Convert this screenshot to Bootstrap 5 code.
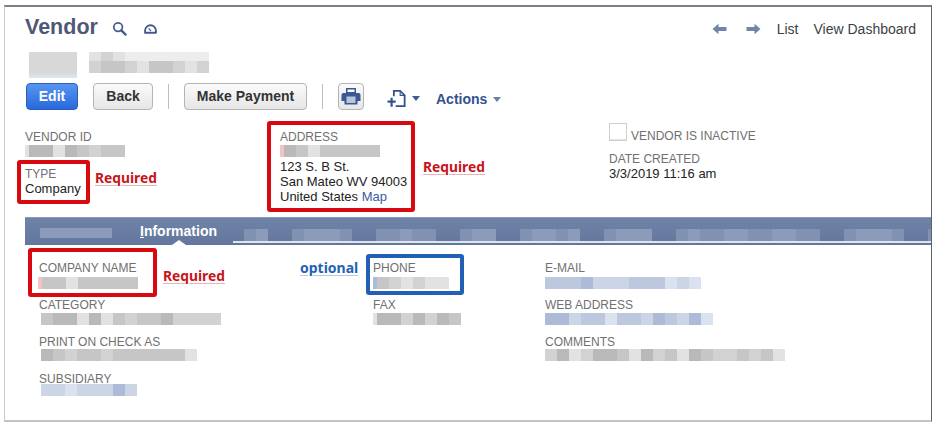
<!DOCTYPE html>
<html lang="en">
<head>
<meta charset="utf-8">
<title>Vendor</title>
<link href="https://cdn.jsdelivr.net/npm/bootstrap@5.3.0/dist/css/bootstrap.min.css" rel="stylesheet">
<style>
html,body{height:100%;background:#fff;overflow:hidden}
body{font-family:"Liberation Sans",Arial,sans-serif;font-size:13px;color:#222;line-height:15px}
.frame{width:928px;height:417px;margin:5px 0 0 4px;border:1px solid #ccc;border-top:2px solid #7b7f87;border-right:1px solid #5f6268;border-bottom:2px solid #c4c4c4}
.head-row{padding:8px 15px 0 20px;height:45px}
.page-title{font-size:21.5px;font-weight:700;line-height:24px;color:#4e5876;margin:0}
.ico-search{margin-left:14px;margin-top:6px}
.ico-gauge{margin-left:16px;margin-top:9px}
.top-links a{color:#3c3f45;text-decoration:none;font-size:14px;line-height:16px}
.top-links{gap:15px;margin-top:6px}
.arrows{gap:19px;margin-right:1px}
.blur-row{padding-left:24px;height:31px;gap:12px}
.blur-a{width:48px;height:26px;filter:blur(.6px);background:linear-gradient(#d8d8d8 0,#d8d8d8 78%,#dce6f6 100%)}
.mos{display:flex;height:12px;filter:blur(.6px)}
.mos i{display:block;width:12px;flex:none}
.mos i.n4{width:4px}
.g0{background:#ededed}.g1{background:#b9b9b9}.g2{background:#c6c6c6}.g3{background:#d2d2d2}.g4{background:#e2e2e2}.gr{background:#f6c3c5}.gb{background:#a9bcdf}
.b1{background:#aebbd8}.b2{background:#bdc8df}.b3{background:#cbd5e6}.b4{background:#dbe2ef}
.t1{background:#8091b1}.t2{background:#8b9bb9}
.stack{display:flex;flex-direction:column;height:21px}
.mos.soft{height:9px}
.act-row{padding-left:21px;height:28px;margin-bottom:4px}
.btn.nsbtn{font-family:"Liberation Sans",Arial,sans-serif;font-size:14px;font-weight:700;line-height:16px;padding:4px 0;border-radius:4px;height:27px;border:1px solid #b4b4b4;color:#333;background:linear-gradient(#fafafa,#e6e6e6)}
.btn.nsbtn.edit{color:#fff;border-color:#2c60b8;background:linear-gradient(#5596f2,#2a68dc);width:52px}
.btn.nsbtn.back{width:60px;margin-left:15px}
.btn.nsbtn.pay{width:123px}
.btn.nsbtn.print{width:26px;padding:0;display:flex;align-items:center;justify-content:center}
.vsep{width:1px;height:25px;background:#bdbdbd;margin:1px 15px}
.new-ico{margin-left:23px;margin-top:7px}
.caret-dn{width:0;height:0;border:4px solid transparent;border-top:5px solid #3f5a92;border-bottom:0}
.caret-dn.mute{border-top-color:#6e7f9f}
.caret-a{margin-left:5px;margin-top:13px}
.caret-b{margin-left:6px}
.act-link{color:#33528f;font-size:14px;font-weight:700;text-decoration:none;line-height:16px;margin-left:16px;margin-top:8px}
.fields-top{height:102px;padding-left:20px;padding-top:15px}
.colA{width:255px}
.colB{width:329px}
.fld{position:relative}
.lbl{font-size:12px;line-height:14px;color:#707070;display:block;white-space:nowrap}
.lbl + .mos{margin-top:1px}
.val{line-height:15.2px;font-size:13px}
.val-addr{margin-top:2px}
.val a{color:#3a5c9f;text-decoration:none}
.type-fld{margin-top:10px}
.ring{position:absolute;border:4px solid #d90a0f;border-radius:3px;pointer-events:none}
.ring.blue{border-color:#2160b5}
.note{position:absolute;font-family:"Noto Sans",sans-serif;font-size:13.8px;font-weight:700;line-height:16px;color:#c8141b;white-space:nowrap;text-decoration:underline;text-decoration-color:#e9b4b4;text-underline-offset:2px}
.note.blue{color:#2462b4;text-decoration-color:#b4c8e6;font-size:14px}
.ring-type{left:-8px;top:-7px;width:73px;height:44px}
.note-type{left:70px;top:3px}
.ring-addr{left:-13px;top:-9px;width:148px;height:91px}
.note-addr{left:143px;top:29px}
.ring-co{left:-11px;top:-13px;width:129px;height:49px}
.note-co{left:124px;top:7px}
.ring-ph{left:-7px;top:-7px;width:98px;height:41px}
.note-ph{left:-73px;top:-1px}
.col-flags{margin-top:-7px}
.flag-row{gap:4px;margin-bottom:11px}
.flag-row .lbl{margin-bottom:-2px}
.chk{width:18px;height:18px;border:1px solid #cfcfcf;flex:none;box-shadow:inset 0 -1px 0 #e6e6e6}
.tabbar{margin-left:20px;height:28px;background:linear-gradient(#6f83a8,#63779d);position:relative;padding-left:15px;border-top:1px solid #8a9ab6}
.tab-first{margin-top:10px;height:10px}
.tab-on{color:#fff;font-size:14px;font-weight:700;line-height:16px;margin-left:28px;width:93px;flex:none;padding-top:5px}
.notch{position:absolute;left:147px;bottom:0;width:0;height:0;border:7px solid transparent;border-bottom:5px solid #fff;border-top:0}
.rest{flex:1;border-bottom:2px solid #dfe5ef;height:25px;padding-left:11px;gap:24px;align-items:flex-start;padding-top:11px;overflow:hidden}
.fields-bot{padding-left:34px;padding-top:16px}
.colC{width:334px}
.colD{width:172px}
.fld-b{height:37px}
.fld-b:nth-child(1) .mos{margin-top:2px}
.fld-b:nth-child(2) .mos{margin-top:1px}
.fld-b:nth-child(3) .mos{margin-top:0}
.fld-b:nth-child(4) .mos{margin-top:-2px}
.in2{margin-left:2px}
.outdent{margin-left:-1px}
</style>
</head>
<body>
<div class="frame">
  <div class="head-row d-flex justify-content-between align-items-start">
    <div class="d-flex align-items-start">
      <h1 class="page-title">Vendor</h1>
      <svg class="ico-search" width="15" height="15" viewBox="0 0 16 16" fill="none" stroke="#41598f" aria-hidden="true"><circle cx="6.5" cy="6.5" r="4.6" stroke-width="1.8"/><path d="M10 10l4.500 4.500" stroke-width="2.400" stroke-linecap="round"/></svg>
      <svg class="ico-gauge" width="15" height="10" viewBox="0 0 15 11" fill="none" stroke="#41598f" aria-hidden="true"><path d="M1.500 9.600V7.200a6 5.800 0 0 1 12 0v2.400z" stroke-width="2" stroke-linejoin="round"/><path d="M5.500 4.800L8 7.600" stroke-width="1.400"/></svg>
    </div>
    <div class="top-links d-flex align-items-center">
      <div class="arrows d-flex">
        <svg width="15" height="12" viewBox="0 0 15 12" fill="#6f86a8" aria-hidden="true"><path d="M0.500 6L6.500 0.800V4H14.500V8H6.500V11.200z"/></svg>
        <svg width="15" height="12" viewBox="0 0 15 12" fill="#6f86a8" aria-hidden="true"><path d="M14.500 6L8.500 0.800V4H0.500V8H8.500V11.200z"/></svg>
      </div>
      <a href="#">List</a>
      <a href="#">View Dashboard</a>
    </div>
  </div>

  <div class="blur-row d-flex">
    <div class="blur-a"></div>
    <div class="stack">
      <div class="mos soft"><i class="g4"></i><i class="g3"></i><i class="g4"></i><i class="g0"></i><i class="g0"></i><i class="g0"></i><i class="g0"></i><i class="g0"></i><i class="g0"></i><i class="g0"></i></div>
      <div class="mos"><i class="g3"></i><i class="g2"></i><i class="g2"></i><i class="g3"></i><i class="g4"></i><i class="g2"></i><i class="g2"></i><i class="g3"></i><i class="g4"></i><i class="g3"></i></div>
    </div>
  </div>

  <div class="act-row d-flex align-items-start">
    <a class="btn nsbtn edit" href="#">Edit</a>
    <a class="btn nsbtn back" href="#">Back</a>
    <span class="vsep"></span>
    <a class="btn nsbtn pay" href="#">Make Payment</a>
    <span class="vsep"></span>
    <a class="btn nsbtn print" href="#" aria-label="Print">
      <svg width="20" height="19" viewBox="0 0 20 19" aria-hidden="true"><path fill="#3a5796" d="M5 1h10v5H5z"/><path fill="#3a5796" d="M2.500 6h15A2 2 0 0 1 19.500 8v6h-3V17.500H3.500V14h-3V8a2 2 0 0 1 2-2z"/><path fill="#b9c6da" d="M5.500 9.500h9v6.500h-9z"/><path fill="#fff" d="M6.500 2.500h7v2.500h-7z"/></svg>
    </a>
    <svg class="new-ico" width="20" height="18" viewBox="0 0 21 20" fill="none" stroke="#33528f" stroke-width="2" aria-hidden="true"><path d="M7 7V1h7l5 5v12H9"/><path d="M14 1v5h5" stroke-width="1.200"/><path d="M0 13h9M4.500 8.500v10" stroke-width="2.400"/></svg>
    <span class="caret-dn caret-a"></span>
    <a class="act-link d-flex align-items-center" href="#">Actions<span class="caret-dn mute caret-b"></span></a>
  </div>

  <div class="fields-top d-flex">
    <div class="colA">
      <div class="fld">
        <span class="lbl">VENDOR ID</span>
        <div class="mos"><i class="n4 g4"></i><i class="g1"></i><i class="g1"></i><i class="g4"></i><i class="g1"></i><i class="g2"></i><i class="g3"></i><i class="g2"></i><i class="g2"></i></div>
      </div>
      <div class="fld type-fld">
        <span class="ring ring-type"></span>
        <span class="lbl">TYPE</span>
        <div class="val">Company</div>
        <span class="note note-type">Required</span>
      </div>
    </div>
    <div class="colB">
      <div class="fld">
        <span class="ring ring-addr"></span>
        <span class="lbl">ADDRESS</span>
        <div class="mos"><i class="n4 gr"></i><i class="g1"></i><i class="g2"></i><i class="g4"></i><i class="g2"></i><i class="g2"></i><i class="g2"></i><i class="g2"></i><i class="g2"></i></div>
        <div class="val val-addr">123 S. B St.<br>San Mateo WV 94003<br>United States <a href="#">Map</a></div>
        <span class="note note-addr">Required</span>
      </div>
    </div>
    <div class="col-flags">
      <div class="d-flex align-items-end flag-row">
        <span class="chk"></span><span class="lbl">VENDOR IS INACTIVE</span>
      </div>
      <span class="lbl">DATE CREATED</span>
      <div class="val">3/3/2019 11:16 am</div>
    </div>
  </div>

  <div class="tabbar d-flex">
    <div class="mos tab-first"><i class="t2"></i><i class="t2"></i><i class="t2"></i><i class="t2"></i><i class="t2"></i><i class="t2"></i></div>
    <div class="tab-on"><u>I</u>nformation</div>
    <span class="notch"></span>
    <div class="rest d-flex">
      <div class="mos"><i class="t1"></i><i class="t2"></i></div>
      <div class="mos"><i class="t1"></i><i class="t2"></i><i class="t2"></i><i class="t2"></i><i class="t1"></i></div>
      <div class="mos"><i class="t1"></i><i class="t1"></i><i class="t2"></i><i class="t1"></i><i class="t1"></i></div>
      <div class="mos"><i class="t1"></i><i class="t2"></i><i class="t2"></i></div>
      <div class="mos"><i class="t1"></i><i class="t2"></i><i class="t2"></i><i class="t1"></i><i class="t2"></i></div>
      <div class="mos"><i class="t1"></i><i class="t2"></i><i class="t2"></i><i class="t2"></i></div>
      <div class="mos"><i class="t1"></i><i class="t2"></i><i class="t1"></i><i class="t1"></i><i class="t2"></i><i class="t2"></i><i class="t1"></i><i class="t1"></i><i class="t2"></i><i class="t2"></i><i class="t1"></i><i class="t1"></i></div>
      <div class="mos"><i class="t1"></i><i class="t2"></i><i class="t2"></i><i class="t2"></i><i class="t1"></i></div>
      <div class="mos"><i class="t1"></i><i class="t2"></i></div>
    </div>
  </div>

  <div class="fields-bot d-flex">
    <div class="colC">
      <div class="fld fld-b">
        <span class="ring ring-co"></span>
        <span class="lbl">COMPANY NAME</span>
        <div class="mos outdent"><i class="n4 gr"></i><i class="g2"></i><i class="g2"></i><i class="g4"></i><i class="g2"></i><i class="g2"></i><i class="g2"></i><i class="g2"></i><i class="g2"></i></div>
        <span class="note note-co">Required</span>
      </div>
      <div class="fld fld-b">
        <span class="lbl">CATEGORY</span>
        <div class="mos in2"><i class="g2"></i><i class="g1"></i><i class="g1"></i><i class="g4"></i><i class="g1"></i><i class="g4"></i><i class="g2"></i><i class="g3"></i><i class="g2"></i><i class="g2"></i><i class="g1"></i><i class="g3"></i><i class="g3"></i><i class="g3"></i><i class="g3"></i></div>
      </div>
      <div class="fld fld-b">
        <span class="lbl">PRINT ON CHECK AS</span>
        <div class="mos in2"><i class="g1"></i><i class="g2"></i><i class="g3"></i><i class="g2"></i><i class="g2"></i><i class="g3"></i><i class="g2"></i><i class="g2"></i><i class="g2"></i><i class="g2"></i><i class="g2"></i><i class="g2"></i><i class="g4"></i></div>
      </div>
      <div class="fld fld-b">
        <span class="lbl">SUBSIDIARY</span>
        <div class="mos in2"><i class="b3"></i><i class="b3"></i><i class="b4"></i><i class="b3"></i><i class="b3"></i><i class="b3"></i><i class="b1"></i><i class="b3"></i></div>
      </div>
    </div>
    <div class="colD">
      <div class="fld fld-b">
        <span class="ring ring-ph blue"></span>
        <span class="note note-ph blue">optional</span>
        <span class="lbl">PHONE</span>
        <div class="mos"><i class="n4 gb"></i><i class="g2"></i><i class="g3"></i><i class="g4"></i><i class="g3"></i><i class="g4"></i><i class="g4"></i></div>
      </div>
      <div class="fld fld-b">
        <span class="lbl">FAX</span>
        <div class="mos"><i class="n4 g4"></i><i class="g1"></i><i class="g1"></i><i class="g3"></i><i class="g1"></i><i class="g3"></i><i class="g1"></i><i class="g2"></i></div>
      </div>
    </div>
    <div>
      <div class="fld fld-b">
        <span class="lbl">E-MAIL</span>
        <div class="mos"><i class="b2"></i><i class="b2"></i><i class="b2"></i><i class="b1"></i><i class="b3"></i><i class="b3"></i><i class="b3"></i><i class="b2"></i><i class="b2"></i><i class="b2"></i><i class="b4"></i><i class="b3"></i><i class="b4"></i></div>
      </div>
      <div class="fld fld-b">
        <span class="lbl">WEB ADDRESS</span>
        <div class="mos"><i class="b1"></i><i class="b1"></i><i class="b3"></i><i class="b2"></i><i class="b2"></i><i class="b4"></i><i class="b2"></i><i class="b2"></i><i class="b3"></i><i class="b1"></i><i class="b2"></i><i class="b3"></i><i class="b1"></i><i class="b4"></i></div>
      </div>
      <div class="fld fld-b">
        <span class="lbl">COMMENTS</span>
        <div class="mos"><i class="g3"></i><i class="g1"></i><i class="g4"></i><i class="g3"></i><i class="g1"></i><i class="g1"></i><i class="g2"></i><i class="g4"></i><i class="g1"></i><i class="g3"></i><i class="g2"></i><i class="g4"></i><i class="g1"></i><i class="g2"></i><i class="g3"></i><i class="g3"></i><i class="g2"></i><i class="g3"></i><i class="g2"></i><i class="g4"></i></div>
      </div>
    </div>
  </div>
</div>
<script src="https://cdn.jsdelivr.net/npm/bootstrap@5.3.0/dist/js/bootstrap.bundle.min.js"></script>
</body>
</html>
